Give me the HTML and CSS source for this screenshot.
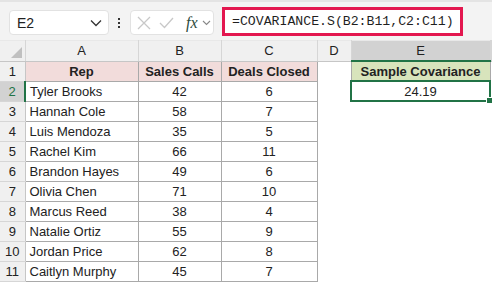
FILE: index.html
```html
<!DOCTYPE html>
<html lang="en">
<head>
    <meta charset="UTF-8">
    <title>Covariance</title>
    <link rel="stylesheet" href="styles.css">
</head>
<body>
    <!-- Formula bar -->
    <div class="toolbar">
        <div class="namebox">
            <span>E2</span>
            <svg width="12" height="8" viewBox="0 0 12 8"><path d="M1 1.5 L6 6.5 L11 1.5" fill="none" stroke="#333" stroke-width="1.3"/></svg>
        </div>
        <div class="dots"><i></i><i></i><i></i></div>
        <div class="fxbox">
            <svg width="14" height="14" viewBox="0 0 14 14"><path d="M1 1 L13 13 M13 1 L1 13" stroke="#c8c8c8" stroke-width="1.3"/></svg>
            <svg width="15" height="12" viewBox="0 0 15 12"><path d="M1 6 L5.5 10.5 L14 1" fill="none" stroke="#c8c8c8" stroke-width="1.3"/></svg>
            <span class="fx">fx</span>
            <svg width="9" height="6" viewBox="0 0 9 6"><path d="M1 1 L4.5 4.5 L8 1" fill="none" stroke="#888" stroke-width="1.1"/></svg>
        </div>
        <div class="formula">=COVARIANCE.S(B2:B11,C2:C11)</div>
    </div>

    <!-- Sheet -->
    <table class="sheet">
        <colgroup>
            <col class="w-rh"><col class="w-a"><col class="w-b"><col class="w-c"><col class="w-d"><col class="w-e"><col>
        </colgroup>
        <tr class="colhead">
            <th class="corner"><span class="tri"></span></th>
            <th>A</th><th>B</th><th>C</th><th>D</th><th class="sel">E</th><th></th>
        </tr>
        <tr>
            <th class="rh">1</th>
            <td class="hd pink">Rep</td><td class="hd pink c">Sales Calls</td><td class="hd pink c">Deals Closed</td>
            <td class="blank"></td><td class="hd green c">Sample Covariance</td><td class="blank"></td>
        </tr>
        <tr>
            <th class="rh sel">2</th>
            <td class="d">Tyler Brooks</td><td class="d c">42</td><td class="d c">6</td>
            <td class="blank"></td><td class="d c active">24.19<span class="handle"></span></td><td class="blank"></td>
        </tr>
        <tr><th class="rh">3</th><td class="d">Hannah Cole</td><td class="d c">58</td><td class="d c">7</td><td class="blank" colspan="3"></td></tr>
        <tr><th class="rh">4</th><td class="d">Luis Mendoza</td><td class="d c">35</td><td class="d c">5</td><td class="blank" colspan="3"></td></tr>
        <tr><th class="rh">5</th><td class="d">Rachel Kim</td><td class="d c">66</td><td class="d c">11</td><td class="blank" colspan="3"></td></tr>
        <tr><th class="rh">6</th><td class="d">Brandon Hayes</td><td class="d c">49</td><td class="d c">6</td><td class="blank" colspan="3"></td></tr>
        <tr><th class="rh">7</th><td class="d">Olivia Chen</td><td class="d c">71</td><td class="d c">10</td><td class="blank" colspan="3"></td></tr>
        <tr><th class="rh">8</th><td class="d">Marcus Reed</td><td class="d c">38</td><td class="d c">4</td><td class="blank" colspan="3"></td></tr>
        <tr><th class="rh">9</th><td class="d">Natalie Ortiz</td><td class="d c">55</td><td class="d c">9</td><td class="blank" colspan="3"></td></tr>
        <tr><th class="rh">10</th><td class="d">Jordan Price</td><td class="d c">62</td><td class="d c">8</td><td class="blank" colspan="3"></td></tr>
        <tr><th class="rh">11</th><td class="d">Caitlyn Murphy</td><td class="d c">45</td><td class="d c">7</td><td class="blank" colspan="3"></td></tr>
    </table>
</body>
</html>
```

FILE: styles.css
```css
body {
    margin: 0;
    background: #fff;
    font-family: 'Liberation Sans', Arial, sans-serif;
    color: #222;
    overflow: hidden;
}

.toolbar {
    display: flex;
    align-items: center;
    height: 40px;
    padding-left: 9px;
    background: #f3f3f3;
    border-top: 2px solid #e4e4e4;
    box-sizing: border-box;
}

.namebox {
    display: flex;
    align-items: center;
    justify-content: space-between;
    width: 100px;
    height: 25px;
    padding: 0 6px 0 7px;
    box-sizing: border-box;
    background: #fff;
    border: 1px solid #e2e2e2;
    border-radius: 4px;
    font-size: 14px;
    margin-top: 3px;
}

.dots {
    display: flex;
    flex-direction: column;
    gap: 2px;
    margin: 3px 10px 0 9px;
}

.dots i {
    width: 2px;
    height: 2px;
    background: #333;
}

.fxbox {
    display: flex;
    align-items: center;
    gap: 8px;
    width: 84px;
    height: 25px;
    padding-left: 6px;
    box-sizing: border-box;
    background: #fff;
    border: 1px solid #e2e2e2;
    border-radius: 4px;
    margin-top: 3px;
}

.fxbox .fx {
    font-family: 'Liberation Serif', serif;
    font-style: italic;
    font-size: 16px;
    color: #2c4a3c;
    margin-left: 4px;
    margin-right: -4px;
}

.formula {
    width: 241px;
    height: 29px;
    margin-left: 8px;
    margin-top: 1px;
    box-sizing: border-box;
    border: 3px solid #e3174f;
    background: #fff;
    font-family: 'Liberation Mono', monospace;
    font-size: 13.2px;
    line-height: 23px;
    padding-left: 7px;
    color: #1f1f1f;
}

.sheet {
    border-collapse: collapse;
    table-layout: fixed;
    width: 492px;
    font-size: 13px;
}

.w-rh { width: 25px; }
.w-a { width: 113px; }
.w-b { width: 83px; }
.w-c { width: 96px; }
.w-d { width: 34px; }
.w-e { width: 139px; }

.sheet tr {
    height: 20px;
}

.colhead th {
    background: #f0f0f0;
    font-weight: normal;
    border-right: 1px solid #d6d6d6;
    border-bottom: 1px solid #c6c6c6;
    border-top: 1px solid #e8e8e8;
    height: 19px;
    padding: 0;
}

.colhead th.sel {
    background: #d2d2d2;
    border-bottom: 2px solid #217346;
}

.corner {
    position: relative;
}

.tri {
    position: absolute;
    right: 3px;
    bottom: 3px;
    width: 0;
    height: 0;
    border-left: 11px solid transparent;
    border-bottom: 11px solid #c0c0c0;
}

.rh {
    background: #f0f0f0;
    font-weight: normal;
    text-align: center;
    border-bottom: 1px solid #d6d6d6;
    border-right: 1px solid #c6c6c6;
    padding: 0;
}

.rh.sel {
    background: #d2d2d2;
    color: #217346;
    border-right: 2px solid #217346;
}

td {
    padding: 0 4px;
    white-space: nowrap;
    overflow: hidden;
}

.d, .hd {
    border: 1px solid #a9a9a9;
}

.hd {
    font-weight: bold;
    text-align: center;
}

.pink {
    background: #f2dcdb;
}

.green {
    background: #d8e4bc;
}

.c {
    text-align: center;
}

.blank {
    border: none;
}

.active {
    position: relative;
    border: 2px solid #217346;
    overflow: visible;
}

.handle {
    position: absolute;
    right: -4px;
    bottom: -4px;
    width: 5px;
    height: 5px;
    background: #217346;
    border: 1px solid #fff;
}
```
